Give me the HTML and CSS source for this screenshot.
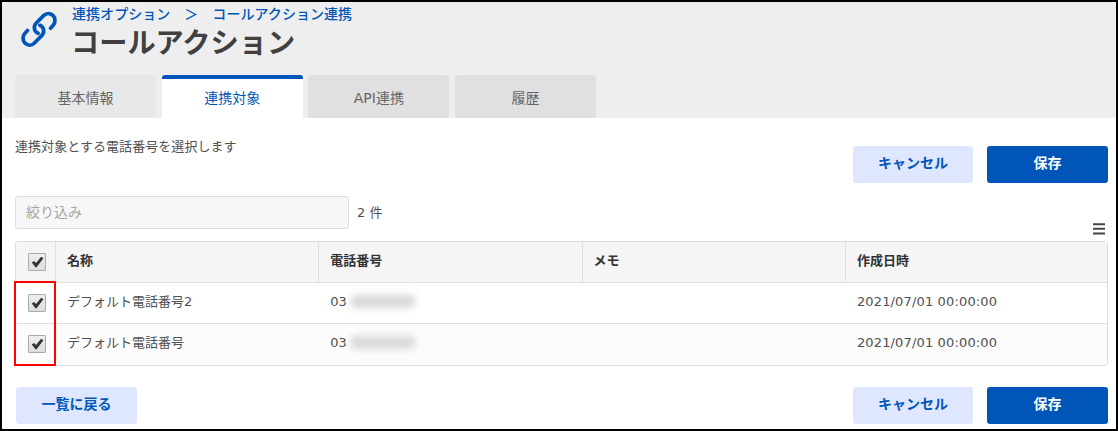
FILE: index.html
```html
<!DOCTYPE html>
<html lang="ja">
<head>
<meta charset="utf-8">
<title>コールアクション</title>
<link rel="stylesheet" href="styles.css">
</head>
<body>
<div class="app">
  <header class="header">
    <div class="heading">
      <svg class="logo" width="38" height="39" viewBox="0 0 38 39" fill="none" stroke="#0056b8" stroke-width="3.7" stroke-linecap="round">
        <path d="M30.5 18.2L33 15.4C35.8 12.4 35.5 7.9 32.9 5.4C30.1 2.8 26.3 2.9 23.8 5.4L16.3 13C13 16.4 14 21.5 18.1 23.3"/>
        <path d="M7.5 20.4L5 23.2C2.2 26.2 2.5 30.7 5.1 33.2C7.9 35.8 11.7 35.7 14.2 33.2L21.7 25.6C25 22.2 24 17.1 19.9 15.3"/>
      </svg>
      <div class="heading-text">
        <nav class="breadcrumb"><span>連携オプション</span><span class="separator">＞</span><span>コールアクション連携</span></nav>
        <h1 class="title">コールアクション</h1>
      </div>
    </div>
    <div class="tabs">
      <div class="tab tab-first">基本情報</div>
      <div class="tab tab-active">連携対象</div>
      <div class="tab">API連携</div>
      <div class="tab">履歴</div>
    </div>
  </header>
  <main class="content">
    <div class="toolbar">
      <p class="description">連携対象とする電話番号を選択します</p>
      <div class="actions"><button class="button cancel">キャンセル</button><button class="button primary">保存</button></div>
    </div>
    <div class="filter">
      <input class="filter-input" type="text" placeholder="絞り込み">
      <span class="count">2 件</span>
      <svg class="menu" width="12" height="12" viewBox="0 0 12 12" fill="#444"><path d="M0 .2h12v2H0zM0 4.8h12v2H0zM0 9.4h12v2H0z"/></svg>
    </div>
    <div class="table">
      <div class="row head">
        <div class="cell check"><span class="box"><svg width="13" height="12" viewBox="0 0 13 12"><path d="M.8 6.6 3 5l2 2L10.2.7 12.4 2.3 5.6 11.3 4.4 11.3Z" fill="#333"/></svg></span></div>
        <div class="cell">名称</div><div class="cell">電話番号</div><div class="cell">メモ</div><div class="cell">作成日時</div>
      </div>
      <div class="row">
        <div class="cell check"><span class="box"><svg width="13" height="12" viewBox="0 0 13 12"><path d="M.8 6.6 3 5l2 2L10.2.7 12.4 2.3 5.6 11.3 4.4 11.3Z" fill="#333"/></svg></span></div>
        <div class="cell">デフォルト電話番号2</div><div class="cell">03<span class="masked"></span></div><div class="cell"></div><div class="cell date">2021/07/01 00:00:00</div>
      </div>
      <div class="row alt">
        <div class="cell check"><span class="box"><svg width="13" height="12" viewBox="0 0 13 12"><path d="M.8 6.6 3 5l2 2L10.2.7 12.4 2.3 5.6 11.3 4.4 11.3Z" fill="#333"/></svg></span></div>
        <div class="cell">デフォルト電話番号</div><div class="cell">03<span class="masked"></span></div><div class="cell"></div><div class="cell date">2021/07/01 00:00:00</div>
      </div>
      <div class="highlight"></div>
    </div>
    <div class="footer">
      <button class="button back">一覧に戻る</button>
      <div class="actions"><button class="button cancel">キャンセル</button><button class="button primary">保存</button></div>
    </div>
  </main>
</div>
</body>
</html>
```
FILE: styles.css
```css
* { box-sizing: border-box; }
body {
  margin: 0;
  font-family: "DejaVu Sans", "Noto Sans CJK JP", sans-serif;
  font-size: 13px;
  color: #505050;
}
.app {
  width: 1118px;
  height: 431px;
  border: 2px solid #000;
  background: #fff;
  overflow: hidden;
}
.header {
  height: 116px;
  background: #eee;
  display: flex;
  flex-direction: column;
  justify-content: space-between;
}
.heading { display: flex; padding-left: 18px; }
.logo { margin-top: 8px; flex: none; }
.heading-text { padding-left: 13px; }
.breadcrumb {
  display: flex;
  height: 24px;
  padding-left: 1px;
  line-height: 24px;
  font-size: 14px;
  font-weight: 500;
  letter-spacing: .05px;
  color: #0056b8;
  white-space: nowrap;
}
.separator { width: 42px; text-align: center; }
.title {
  margin: 0;
  font-family: "Noto Sans CJK JP", sans-serif;
  font-size: 28.2px;
  line-height: 29px;
  font-weight: 700;
  color: #404040;
}
.tabs { display: flex; gap: 5.7px; padding-left: 13px; }
.tab {
  width: 141px;
  height: 43px;
  line-height: 46px;
  border-radius: 3px 3px 0 0;
  background: #e0e0e0;
  color: #666;
  font-size: 14px;
  text-align: center;
}
.tab-first { background: #e8e8e8; }
.tab-active {
  background: #fff;
  border-top: 4px solid #0056b8;
  line-height: 38px;
  color: #0056b8;
}
.content { padding: 0 8px 0 13px; }
.toolbar { display: flex; justify-content: space-between; height: 78px; padding-top: 28px; }
.description { margin: -9px 0 0; line-height: 20px; letter-spacing: .06px; }
.actions { display: flex; gap: 14px; }
.button {
  width: 121px;
  height: 37px;
  padding: 0 0 4px;
  border: 0;
  border-radius: 3px;
  background: #dfe6ff;
  color: #0056b8;
  font: 700 14px/33px "Noto Sans CJK JP", sans-serif;
}
.cancel { width: 120px; }
.primary { background: #0056b8; color: #fff; }
.filter { display: flex; height: 45px; }
.filter-input {
  width: 334px;
  height: 33px;
  padding: 0 10px 3px;
  border: 1px solid #ddd;
  border-radius: 3px;
  background: #f7f7f7;
  font: 14px "Noto Sans CJK JP", sans-serif;
}
.filter-input::placeholder { color: #a5a5a5; }
.count { margin-left: 8px; line-height: 33px; }
.menu { margin: 27px 3px 0 auto; }
.table {
  position: relative;
  height: 125px;
  border: 1px solid #ddd;
  border-radius: 3px;
}
.row {
  display: grid;
  grid-template-columns: 39px repeat(3, 263.3px) 1fr;
  height: 41px;
  border-bottom: 1px solid #e0e0e0;
}
.row:nth-child(3) { border-bottom: 0; }
.cell { padding-left: 11px; line-height: 38px; white-space: nowrap; }
.head { background: #f5f5f5; font-weight: 700; color: #333; }
.head .cell + .cell { border-left: 1px solid #e0e0e0; }
.row:not(.head) .cell + .cell { padding-left: 12px; }
.alt { background: #fcfcfc; }
.check { display: flex; padding: 11px 0 0 12px; }
.box {
  display: flex;
  justify-content: center;
  align-items: center;
  width: 18px;
  height: 18px;
  border: 1px solid #aaa;
  border-radius: 1px;
  background: linear-gradient(#eee, #ddd);
}
.date { letter-spacing: .15px; }
.masked {
  display: inline-block;
  width: 64px;
  height: 13px;
  margin: -2px 0 0 4px;
  border-radius: 4px;
  background: #d9d9d9;
  filter: blur(3.5px);
  vertical-align: middle;
}
.highlight {
  position: absolute;
  left: -2px;
  top: 39px;
  width: 42px;
  height: 85px;
  border: 2px solid #f00;
}
.footer { display: flex; justify-content: space-between; padding-top: 21px; }
.back { margin-left: 1px; }
```
